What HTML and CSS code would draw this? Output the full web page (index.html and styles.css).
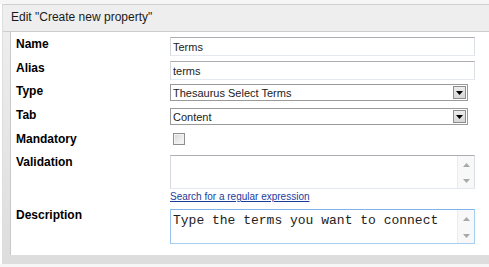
FILE: index.html
```html
<!DOCTYPE html>
<html lang="en">
<head>
  <meta charset="UTF-8">
  <title>Edit property</title>
  <link rel="stylesheet" href="styles.css">
</head>
<body>
  <div class="panel">
    <div class="panel-head">Edit "Create new property"</div>
    <div class="panel-body">
      <div class="form">
        <label class="lbl">Name</label>
        <div class="ctl row-name"><input class="textbox" type="text" value="Terms"></div>

        <label class="lbl">Alias</label>
        <div class="ctl row-alias"><input class="textbox" type="text" value="terms"></div>

        <label class="lbl">Type</label>
        <div class="ctl row-type">
          <div class="combo">
            <span class="combo-text">Thesaurus Select Terms</span>
            <span class="combo-btn"><svg width="7" height="4" viewBox="0 0 7 4"><path d="M0 0h7L3.5 4z" fill="#000"/></svg></span>
          </div>
        </div>

        <label class="lbl">Tab</label>
        <div class="ctl row-tab">
          <div class="combo">
            <span class="combo-text">Content</span>
            <span class="combo-btn"><svg width="7" height="4" viewBox="0 0 7 4"><path d="M0 0h7L3.5 4z" fill="#000"/></svg></span>
          </div>
        </div>

        <label class="lbl lbl-check">Mandatory</label>
        <div class="ctl row-check"><input class="check" type="checkbox"></div>

        <label class="lbl">Validation</label>
        <div class="ctl row-valid">
          <div class="memo">
            <textarea class="memo-text"></textarea>
            <div class="scroll">
              <svg width="7" height="4" viewBox="0 0 7 4"><path d="M0 4h7L3.5 0z" fill="#a8a8a8"/></svg>
              <svg width="7" height="4" viewBox="0 0 7 4"><path d="M0 0h7L3.5 4z" fill="#a8a8a8"/></svg>
            </div>
          </div>
          <a class="regex-link" href="#">Search for a regular expression</a>
        </div>

        <label class="lbl lbl-desc">Description</label>
        <div class="ctl row-desc">
          <div class="memo memo-focus">
            <textarea class="memo-text mono">Type the terms you want to connect</textarea>
            <div class="scroll">
              <svg width="7" height="4" viewBox="0 0 7 4"><path d="M0 4h7L3.5 0z" fill="#a8a8a8"/></svg>
              <svg width="7" height="4" viewBox="0 0 7 4"><path d="M0 0h7L3.5 4z" fill="#a8a8a8"/></svg>
            </div>
          </div>
        </div>
      </div>
    </div>
  </div>
</body>
</html>
```

FILE: styles.css
```css
body {
  margin: 0;
  font-family: "Liberation Sans", Arial, sans-serif;
  background: linear-gradient(#f6f6f6 0, #f6f6f6 4px, #fff 4px);
  color: #000;
}

.panel {
  margin: 4px 0 0 2px;
  border-top: 1px solid #d0d0d0;
  border-left: 1px solid #dedede;
  background: linear-gradient(to bottom, #efefef, #dddddd);
  padding-bottom: 9px;
}

.panel-head {
  height: 26px;
  line-height: 25px;
  padding-left: 8px;
  background: #eeeeee;
  border-bottom: 1px solid #cdcdcd;
  font-size: 12px;
  color: #1a1a1a;
}

.panel-body {
  margin-left: 7px;
  border-left: 1px solid #c9c9c9;
  background: #fff;
  padding: 5px 0 11px 5px;
}

.form {
  display: grid;
  grid-template-columns: 154px 305px;
  align-items: start;
}

.lbl {
  font-size: 12px;
  font-weight: bold;
  line-height: 14px;
}

.lbl-check {
  margin-top: -1px;
}

.lbl-desc {
  margin-top: -1px;
}

.textbox {
  display: block;
  box-sizing: border-box;
  width: 305px;
  height: 19px;
  margin: 0;
  padding: 0 2px;
  border: 1px solid;
  border-color: #abadb3 #dbdfe6 #e3e9ef #d5d8de;
  font-family: "Liberation Sans", Arial, sans-serif;
  font-size: 11px;
  color: #222;
  outline: none;
}

.row-name { margin-bottom: 5px; }
.row-alias { margin-bottom: 4px; }
.row-type { margin-bottom: 7px; }
.row-tab { margin-bottom: 8px; }
.row-check { margin-bottom: 10px; padding-left: 3px; }

.combo {
  box-sizing: border-box;
  width: 298px;
  height: 17px;
  border: 1px solid #9a9a9a;
  display: flex;
  align-items: center;
  justify-content: space-between;
  font-size: 11px;
  color: #222;
}

.combo-text {
  padding-left: 2px;
}

.combo-btn {
  box-sizing: border-box;
  width: 13px;
  height: 13px;
  margin-right: 1px;
  border: 1px solid #8d8d8d;
  background: linear-gradient(#ececec, #d6d6d6);
  display: flex;
  align-items: center;
  justify-content: center;
}

.check {
  appearance: none;
  box-sizing: border-box;
  width: 12px;
  height: 12px;
  margin: 0;
  border: 1px solid #8f8f8f;
  background: linear-gradient(135deg, #d6d6d6, #fbfbfb);
  box-shadow: inset 0 0 0 1px #f2f2f2;
  display: block;
}

.memo {
  box-sizing: border-box;
  width: 305px;
  border: 1px solid;
  border-color: #abadb3 #dbdfe6 #e3e9ef #d5d8de;
  display: flex;
  background: #fff;
}

.row-valid .memo {
  height: 34px;
}

.row-desc .memo {
  height: 35px;
}

.memo-focus {
  border-color: #7eb4ea #a6cdf2 #a6cdf2 #98c3ee;
}

.memo-text {
  flex: 1;
  border: 0;
  margin: 0;
  padding: 1px 2px;
  resize: none;
  overflow: hidden;
  outline: none;
  font-family: "Liberation Sans", Arial, sans-serif;
  font-size: 11px;
  background: transparent;
}

.memo-text.mono {
  font-family: "Liberation Mono", "Courier New", monospace;
  font-size: 13px;
  line-height: 15px;
  padding: 3px 2px;
  color: #222;
}

.scroll {
  width: 16px;
  border-left: 1px solid #ececec;
  background: #f8f8f8;
  display: flex;
  flex-direction: column;
  align-items: center;
  justify-content: space-between;
  padding: 7px 0 5px;
}

.regex-link {
  display: block;
  margin-top: 2px;
  height: 18px;
  font-size: 10px;
  line-height: 12px;
  color: #1c3c9c;
}
```
